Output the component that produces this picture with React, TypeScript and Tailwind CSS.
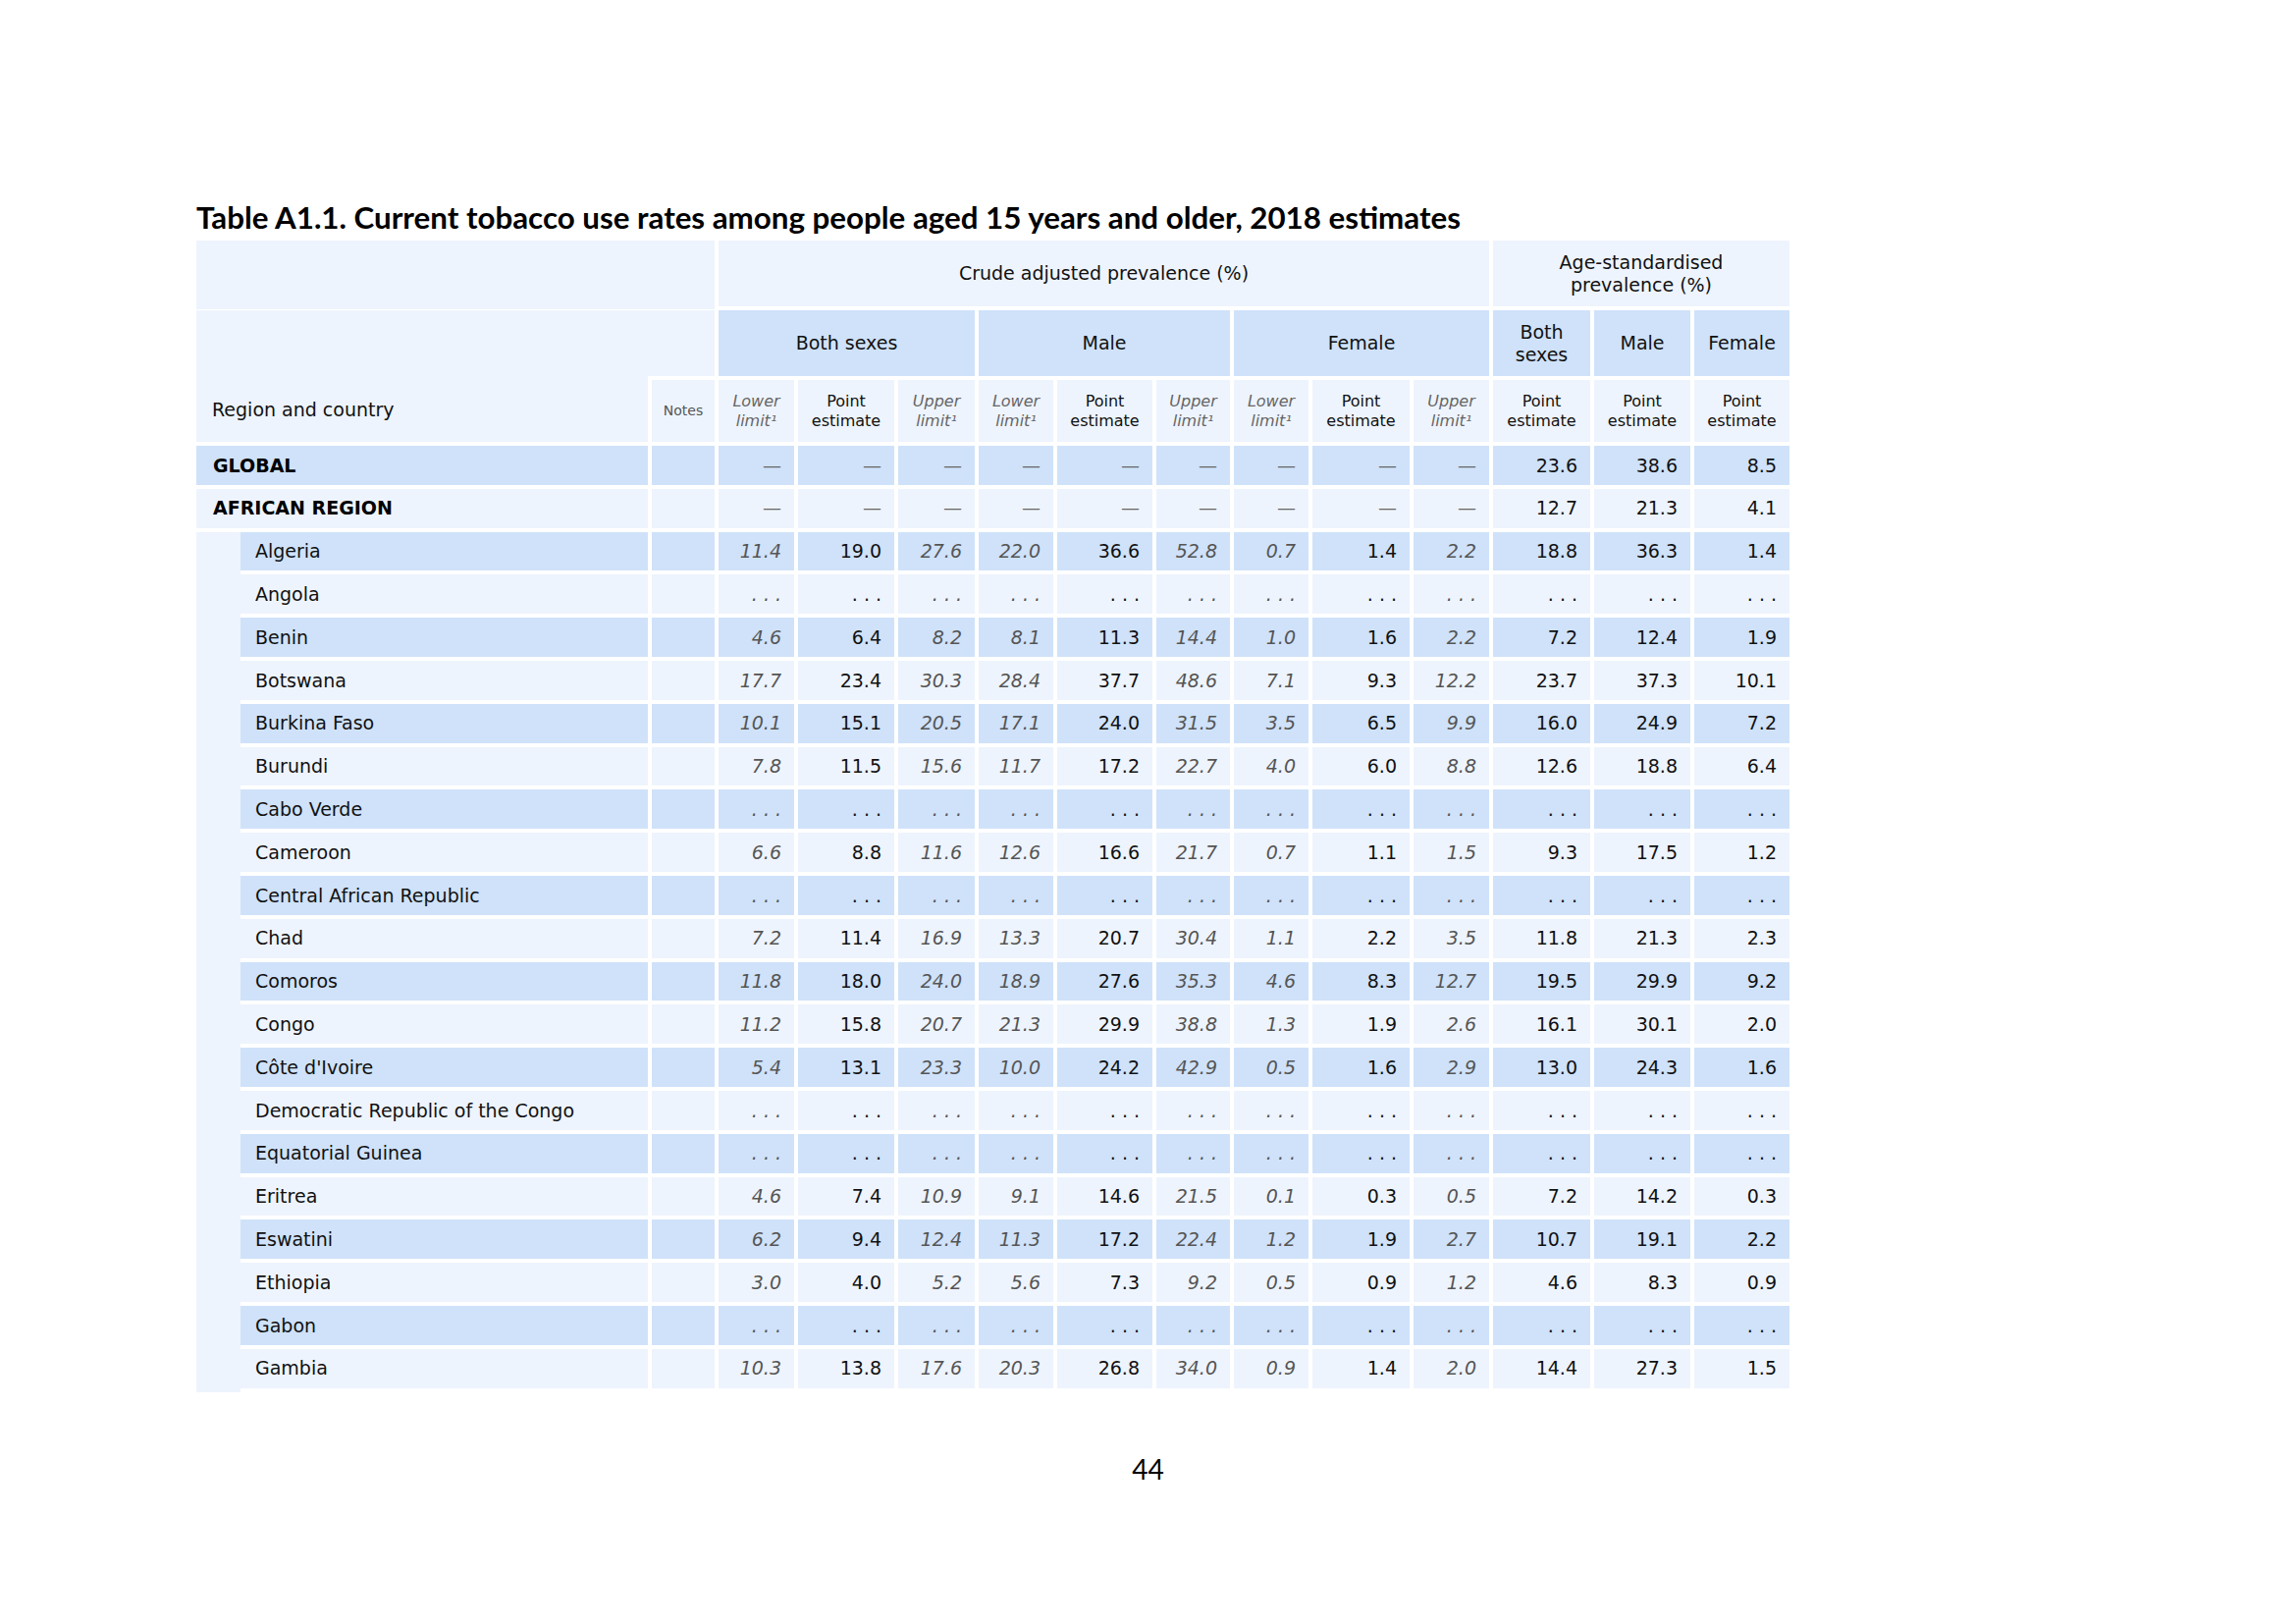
import React from 'react';

type Row = { name: string; kind: 'region' | 'country'; values: string[] };

const DASH = '—';
const NA = '. . .';
const na = Array(12).fill(NA);
const dashes = Array(9).fill(DASH);

const parse = (s: string) => s.split(' ');

const rows: Row[] = [
  { name: 'GLOBAL', kind: 'region', values: [...dashes, '23.6', '38.6', '8.5'] },
  { name: 'AFRICAN REGION', kind: 'region', values: [...dashes, '12.7', '21.3', '4.1'] },
  { name: 'Algeria', kind: 'country', values: parse('11.4 19.0 27.6 22.0 36.6 52.8 0.7 1.4 2.2 18.8 36.3 1.4') },
  { name: 'Angola', kind: 'country', values: na },
  { name: 'Benin', kind: 'country', values: parse('4.6 6.4 8.2 8.1 11.3 14.4 1.0 1.6 2.2 7.2 12.4 1.9') },
  { name: 'Botswana', kind: 'country', values: parse('17.7 23.4 30.3 28.4 37.7 48.6 7.1 9.3 12.2 23.7 37.3 10.1') },
  { name: 'Burkina Faso', kind: 'country', values: parse('10.1 15.1 20.5 17.1 24.0 31.5 3.5 6.5 9.9 16.0 24.9 7.2') },
  { name: 'Burundi', kind: 'country', values: parse('7.8 11.5 15.6 11.7 17.2 22.7 4.0 6.0 8.8 12.6 18.8 6.4') },
  { name: 'Cabo Verde', kind: 'country', values: na },
  { name: 'Cameroon', kind: 'country', values: parse('6.6 8.8 11.6 12.6 16.6 21.7 0.7 1.1 1.5 9.3 17.5 1.2') },
  { name: 'Central African Republic', kind: 'country', values: na },
  { name: 'Chad', kind: 'country', values: parse('7.2 11.4 16.9 13.3 20.7 30.4 1.1 2.2 3.5 11.8 21.3 2.3') },
  { name: 'Comoros', kind: 'country', values: parse('11.8 18.0 24.0 18.9 27.6 35.3 4.6 8.3 12.7 19.5 29.9 9.2') },
  { name: 'Congo', kind: 'country', values: parse('11.2 15.8 20.7 21.3 29.9 38.8 1.3 1.9 2.6 16.1 30.1 2.0') },
  { name: "Côte d'Ivoire", kind: 'country', values: parse('5.4 13.1 23.3 10.0 24.2 42.9 0.5 1.6 2.9 13.0 24.3 1.6') },
  { name: 'Democratic Republic of the Congo', kind: 'country', values: na },
  { name: 'Equatorial Guinea', kind: 'country', values: na },
  { name: 'Eritrea', kind: 'country', values: parse('4.6 7.4 10.9 9.1 14.6 21.5 0.1 0.3 0.5 7.2 14.2 0.3') },
  { name: 'Eswatini', kind: 'country', values: parse('6.2 9.4 12.4 11.3 17.2 22.4 1.2 1.9 2.7 10.7 19.1 2.2') },
  { name: 'Ethiopia', kind: 'country', values: parse('3.0 4.0 5.2 5.6 7.3 9.2 0.5 0.9 1.2 4.6 8.3 0.9') },
  { name: 'Gabon', kind: 'country', values: na },
  { name: 'Gambia', kind: 'country', values: parse('10.3 13.8 17.6 20.3 26.8 34.0 0.9 1.4 2.0 14.4 27.3 1.5') },
];

// limit columns are italic grey
const limitCols = [0, 2, 3, 5, 6, 8];

const BLUE = 'bg-[#cfe2fa]';
const LIGHT = 'bg-[#eef4fd]';

const LimitHead = ({ label }: { label: string }) => (
  <div className={`${LIGHT} flex flex-col items-center justify-center text-[16px] leading-[20px] italic text-[#666]`}>
    <span>{label}</span>
    <span>limit¹</span>
  </div>
);

const PointHead = () => (
  <div className={`${LIGHT} flex flex-col items-center justify-center text-[16px] leading-[20px] text-[#111]`}>
    <span>Point</span>
    <span>estimate</span>
  </div>
);

const Cell = ({ value, col, bg }: { value: string; col: number; bg: string }) => {
  const isLimit = limitCols.includes(col);
  let color = 'text-[#111]';
  if (value === DASH) color = 'text-[#666]';
  else if (isLimit) color = 'italic text-[#555]';
  return (
    <div className={`${bg} flex items-center justify-end pr-[13px] text-[19px] ${color}`}>
      {value}
    </div>
  );
};

const App: React.FC = () => {
  return (
    <div className="min-h-screen w-full bg-white pt-[202px] pl-[200px]">
      <h1 className="font-['Lato',sans-serif] font-bold text-[31.3px] leading-[38px] text-black">
        Table A1.1. Current tobacco use rates among people aged 15 years and older, 2018 estimates
      </h1>

      <div className="mt-[5px] grid w-fit grid-cols-[460px_64px_77px_98px_78px_76px_97px_75px_76px_99px_77px_99px_98px_97px] grid-rows-[67px_67px_63px] auto-rows-[39.8px] gap-1 font-['DejaVu_Sans',Verdana,sans-serif] text-[19px] text-[#111]">
        {/* header row 1 */}
        <div className={`${LIGHT} col-span-2 -mb-[3px]`} />
        <div className={`${LIGHT} col-span-9 flex items-center justify-center`}>
          Crude adjusted prevalence (%)
        </div>
        <div className={`${LIGHT} col-span-3 flex items-center justify-center text-center leading-[23px]`}>
          Age-standardised
          <br />
          prevalence (%)
        </div>

        {/* header row 2 */}
        <div className={`${LIGHT} row-span-2 flex items-end pl-4 pb-[19px]`}>Region and country</div>
        <div className={`${LIGHT} -ml-1`} />
        <div className={`${BLUE} col-span-3 flex items-center justify-center`}>Both sexes</div>
        <div className={`${BLUE} col-span-3 flex items-center justify-center`}>Male</div>
        <div className={`${BLUE} col-span-3 flex items-center justify-center`}>Female</div>
        <div className={`${BLUE} flex items-center justify-center text-center leading-[23px]`}>
          Both
          <br />
          sexes
        </div>
        <div className={`${BLUE} flex items-center justify-center`}>Male</div>
        <div className={`${BLUE} flex items-center justify-center`}>Female</div>

        {/* header row 3 */}
        <div className={`${LIGHT} flex items-center justify-center text-[14px] text-[#555]`}>Notes</div>
        <LimitHead label="Lower" />
        <PointHead />
        <LimitHead label="Upper" />
        <LimitHead label="Lower" />
        <PointHead />
        <LimitHead label="Upper" />
        <LimitHead label="Lower" />
        <PointHead />
        <LimitHead label="Upper" />
        <PointHead />
        <PointHead />
        <PointHead />

        {/* body */}
        {rows.map((row, i) => {
          const bg = i % 2 === 0 ? BLUE : LIGHT;
          return (
            <React.Fragment key={row.name}>
              {row.kind === 'region' ? (
                <div className={`${bg} flex items-center pl-[17px] font-bold text-black`}>{row.name}</div>
              ) : (
                <div className="flex">
                  <div className={`${LIGHT} w-[45px] h-[43.8px] shrink-0`} />
                  <div className={`${bg} flex flex-1 items-center pl-[15px]`}>{row.name}</div>
                </div>
              )}
              <div className={bg} />
              {row.values.map((v, c) => (
                <Cell key={c} value={v} col={c} bg={bg} />
              ))}
            </React.Fragment>
          );
        })}
      </div>

      <div className="-ml-[200px] mt-[65px] text-center font-['Lato',sans-serif] text-[28px] leading-[34px] text-black">
        44
      </div>
    </div>
  );
};

export default App;
